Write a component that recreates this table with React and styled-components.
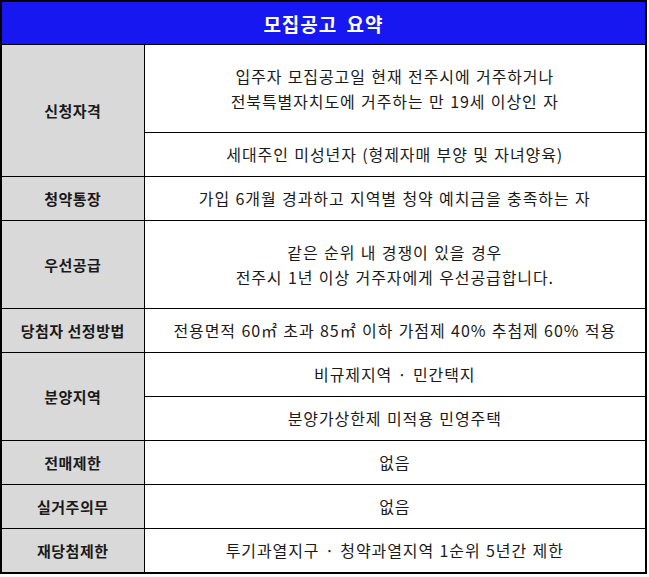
import styled, { createGlobalStyle } from 'styled-components';

const GlobalStyle = createGlobalStyle`
  body {
    margin: 0;
    background: #ffffff;
    font-family: 'Noto Sans CJK KR', 'Noto Sans', sans-serif;
  }
`;

const Table = styled.table`
  width: 647px;
  border-collapse: collapse;
  border: 2px solid #000;
  table-layout: fixed;
  color: #1a1a1a;
`;

const TitleCell = styled.th`
  height: 42px;
  padding: 0;
  background: #1717f2;
  color: #fff;
  font-size: 19px;
  font-weight: 700;
  letter-spacing: 1px;
  word-spacing: 4px;
  text-align: center;
  border-bottom: 1px solid #000;
`;

const Label = styled.th`
  padding: 0;
  background: #d9d9d9;
  font-size: 15px;
  font-weight: 700;
  letter-spacing: 0.5px;
  text-align: center;
  border: 1px solid #000;
`;

const Value = styled.td`
  height: ${({ tall }) => (tall ? '87px' : '43px')};
  padding: 0;
  font-size: 16px;
  line-height: 25px;
  letter-spacing: 0.9px;
  word-spacing: 1px;
  text-align: center;
  border: 1px solid #000;
`;

const ROWS = [
  { label: '신청자격', values: [{ text: ['입주자 모집공고일 현재 전주시에 거주하거나', '전북특별자치도에 거주하는 만 19세 이상인 자'], tall: true }, { text: ['세대주인 미성년자 (형제자매 부양 및 자녀양육)'] }] },
  { label: '청약통장', values: [{ text: ['가입 6개월 경과하고 지역별 청약 예치금을 충족하는 자'] }] },
  { label: '우선공급', values: [{ text: ['같은 순위 내 경쟁이 있을 경우', '전주시 1년 이상 거주자에게 우선공급합니다.'], tall: true }] },
  { label: '당첨자 선정방법', values: [{ text: ['전용면적 60㎡ 초과 85㎡ 이하 가점제 40% 추첨제 60% 적용'] }] },
  { label: '분양지역', values: [{ text: ['비규제지역 · 민간택지'] }, { text: ['분양가상한제 미적용 민영주택'] }] },
  { label: '전매제한', values: [{ text: ['없음'] }] },
  { label: '실거주의무', values: [{ text: ['없음'] }] },
  { label: '재당첨제한', values: [{ text: ['투기과열지구 · 청약과열지역 1순위 5년간 제한'] }] },
];

const renderText = (lines) =>
  lines.map((line, i) => (
    <span key={i}>
      {i > 0 && <br />}
      {line}
    </span>
  ));

const App = () => (
  <>
    <GlobalStyle />
    <Table>
      <colgroup>
        <col style={{ width: 143 }} />
        <col />
      </colgroup>
      <thead>
        <tr>
          <TitleCell colSpan={2}>모집공고 요약</TitleCell>
        </tr>
      </thead>
      <tbody>
        {ROWS.map((row) =>
          row.values.map((v, i) => (
            <tr key={row.label + i}>
              {i === 0 && <Label rowSpan={row.values.length}>{row.label}</Label>}
              <Value tall={v.tall}>{renderText(v.text)}</Value>
            </tr>
          ))
        )}
      </tbody>
    </Table>
  </>
);

export default App;
